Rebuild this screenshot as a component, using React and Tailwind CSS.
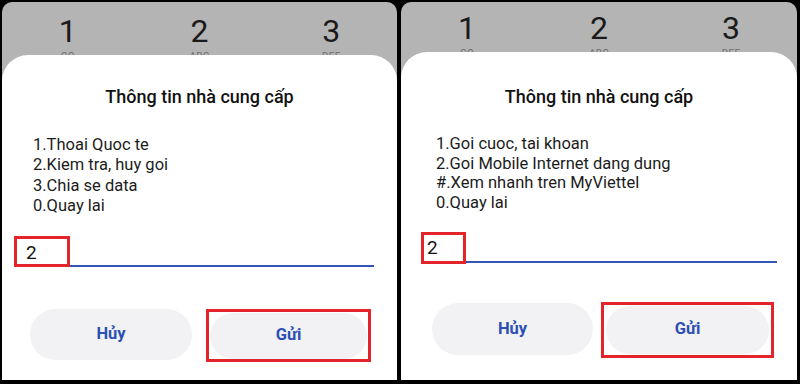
function Keypad({ h, pad }){
  const keys = [['1', 'GO'], ['2', 'ABC'], ['3', 'DEF']]
  return (
    <div className={`${h} shrink-0 grid grid-cols-3 overflow-hidden`}>
      {keys.map(([d, s]) => (
        <div key={d} className={`flex flex-col items-center ${pad}`}>
          <span className="text-[32px] leading-[36px] text-[#1a1a1a]">{d}</span>
          <span className="text-[10px] leading-[12px] mt-[2px] text-[#6f6f6f] tracking-wide">{s}</span>
        </div>
      ))}
    </div>
  )
}

function Panel({ variant }){
  const isLeft = variant === 'left'
  const items = isLeft
    ? ['1.Thoai Quoc te', '2.Kiem tra, huy goi', '3.Chia se data', '0.Quay lai']
    : ['1.Goi cuoc, tai khoan', '2.Goi Mobile Internet dang dung', '#.Xem nhanh tren MyViettel', '0.Quay lai']

  return (
    <div className={`${isLeft ? 'w-[395px]' : 'w-[396px]'} h-full flex flex-col bg-[#b4b4b4] rounded-t-[10px] overflow-hidden`}>
      <Keypad h={isLeft ? 'h-[53px]' : 'h-[50px]'} pad={isLeft ? 'pt-[11px]' : 'pt-[8px]'} />
      <div className="flex-1 bg-white rounded-t-[26px] flex flex-col">
        <div className={`${isLeft ? 'pt-[30px]' : 'pt-[33px]'} text-center text-[18px] leading-[24px] font-medium text-[#111]`}>
          Thông tin nhà cung cấp
        </div>

        <div className={`${isLeft ? 'mt-[26px] pl-[31px]' : 'mt-[25px] pl-[35px]'} text-[16.5px] text-[#1c1c1c]`}>
          {items.map(t => (
            <div key={t} className={isLeft ? 'leading-[20.3px]' : 'leading-[19.7px]'}>{t}</div>
          ))}
        </div>

        <div className={`relative ${isLeft ? 'mt-[21px] ml-[22px] w-[350px]' : 'mt-[20px] ml-[25px] w-[351px]'} h-[30px] border-b-2 border-[#3556b8] flex items-center`}>
          <span className={`text-[19px] leading-none text-[#111] ${isLeft ? 'pl-[2px] pt-[3px]' : 'pl-[1px] pt-[1px]'}`}>2</span>
          <div className={`absolute border-[3px] border-[#e3242b] ${isLeft ? '-left-[10px] w-[56px] -top-[1px] h-[31px]' : '-left-[5px] w-[45px] -top-[1px] h-[32px]'}`} />
        </div>

        <div className={`flex items-center ${isLeft ? 'mt-[39px] pl-[28px] gap-[14px]' : 'mt-[38px] pl-[31px] gap-[8px]'}`}>
          <button className={`${isLeft ? 'w-[162px] h-[51px]' : 'w-[161px] h-[52px]'} rounded-full bg-[#f2f2f4] text-[16.5px] font-bold text-[#2b4fb3]`}>
            Hủy
          </button>
          <div className={`border-[3px] border-[#e3242b] ${isLeft ? 'w-[165px] h-[53px] mt-[3px]' : 'w-[173px] h-[56px] mt-[1px]'} flex items-center justify-center`}>
            <button className={`${isLeft ? 'w-[157px] h-[46px]' : 'w-[163px] h-[48px]'} rounded-full bg-[#f2f2f4] text-[16.5px] font-bold text-[#2b4fb3]`}>
              Gửi
            </button>
          </div>
        </div>
      </div>
    </div>
  )
}

export default function App(){
  return (
    <div className="w-[800px] h-[384px] bg-black flex gap-[4px] pt-[2px] pl-[2px] pr-[3px] pb-[4px]" style={{ fontFamily: 'Roboto, "Noto Sans", sans-serif' }}>
      <Panel variant="left" />
      <Panel variant="right" />
    </div>
  )
}
